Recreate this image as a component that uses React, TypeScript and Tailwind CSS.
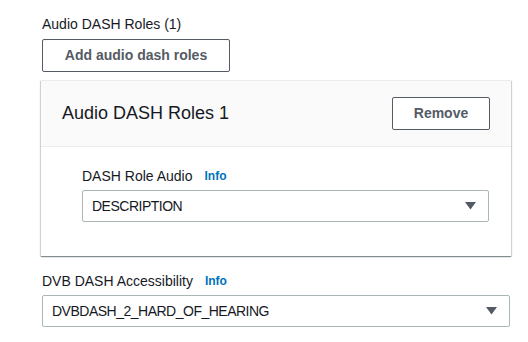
import React from 'react';

const font = { fontFamily: '"Liberation Sans", Arial, sans-serif' };

function Caret() {
    return (
        <svg width="11" height="8" viewBox="0 0 11 8" className="shrink-0">
            <path d="M0 0 H11 L5.5 7.5 Z" fill="#545b64" />
        </svg>
    );
}

function Select({ value, className }: { value: string, className?: string }) {
    return (
        <div className={`flex h-8 items-center justify-between rounded-[2px] border border-[#aab7b8] bg-white pl-[9px] pr-[12px] text-[14px] text-[#16191f] ${className ?? ''}`}>
            <span className="tracking-[-0.5px]">{value}</span>
            <Caret />
        </div>
    );
}

function Label({ text }: { text: string }) {
    return (
        <div className="flex h-5 items-center gap-[12px] text-[14px] leading-5 text-[#16191f]">
            <span>{text}</span>
            <span className="text-[12px] font-bold text-[#0073bb]">Info</span>
        </div>
    );
}

export default function App() {
    return (
        <div style={font} className="h-[342px] w-[528px] bg-white pl-[42px] pr-[18px] pt-[14px]">
            <div className="text-[14px] leading-5 text-[#16191f]">Audio DASH Roles (1)</div>
            <button className="mt-[5px] flex h-[33px] w-[188px] items-center justify-center rounded-[2px] border border-[#545b64] bg-white text-[14px] font-bold text-[#545b64]">
                Add audio dash roles
            </button>

            <div className="-ml-px mt-[8px] w-[470px] border-t border-[#eaeded] bg-white shadow-[0_1px_1px_0_rgba(0,28,36,0.3),1px_1px_1px_0_rgba(0,28,36,0.15),-1px_1px_1px_0_rgba(0,28,36,0.15)]">
                <div className="flex h-[66px] items-center justify-between border-b border-[#eaeded] bg-[#fafafa] pl-[21px] pr-[21px]">
                    <div className="text-[18px] text-[#16191f]">Audio DASH Roles 1</div>
                    <button className="flex h-[33px] w-[98px] items-center justify-center rounded-[2px] border border-[#545b64] bg-white text-[14px] font-bold text-[#545b64]">
                        Remove
                    </button>
                </div>
                <div className="pb-[34px] pl-[41px] pr-[22px] pt-[19px]">
                    <Label text="DASH Role Audio" />
                    <Select value="DESCRIPTION" className="mt-[4px]" />
                </div>
            </div>

            <div className="mt-[15px]">
                <Label text="DVB DASH Accessibility" />
                <Select value="DVBDASH_2_HARD_OF_HEARING" className="mt-[4px]" />
            </div>
        </div>
    );
}
